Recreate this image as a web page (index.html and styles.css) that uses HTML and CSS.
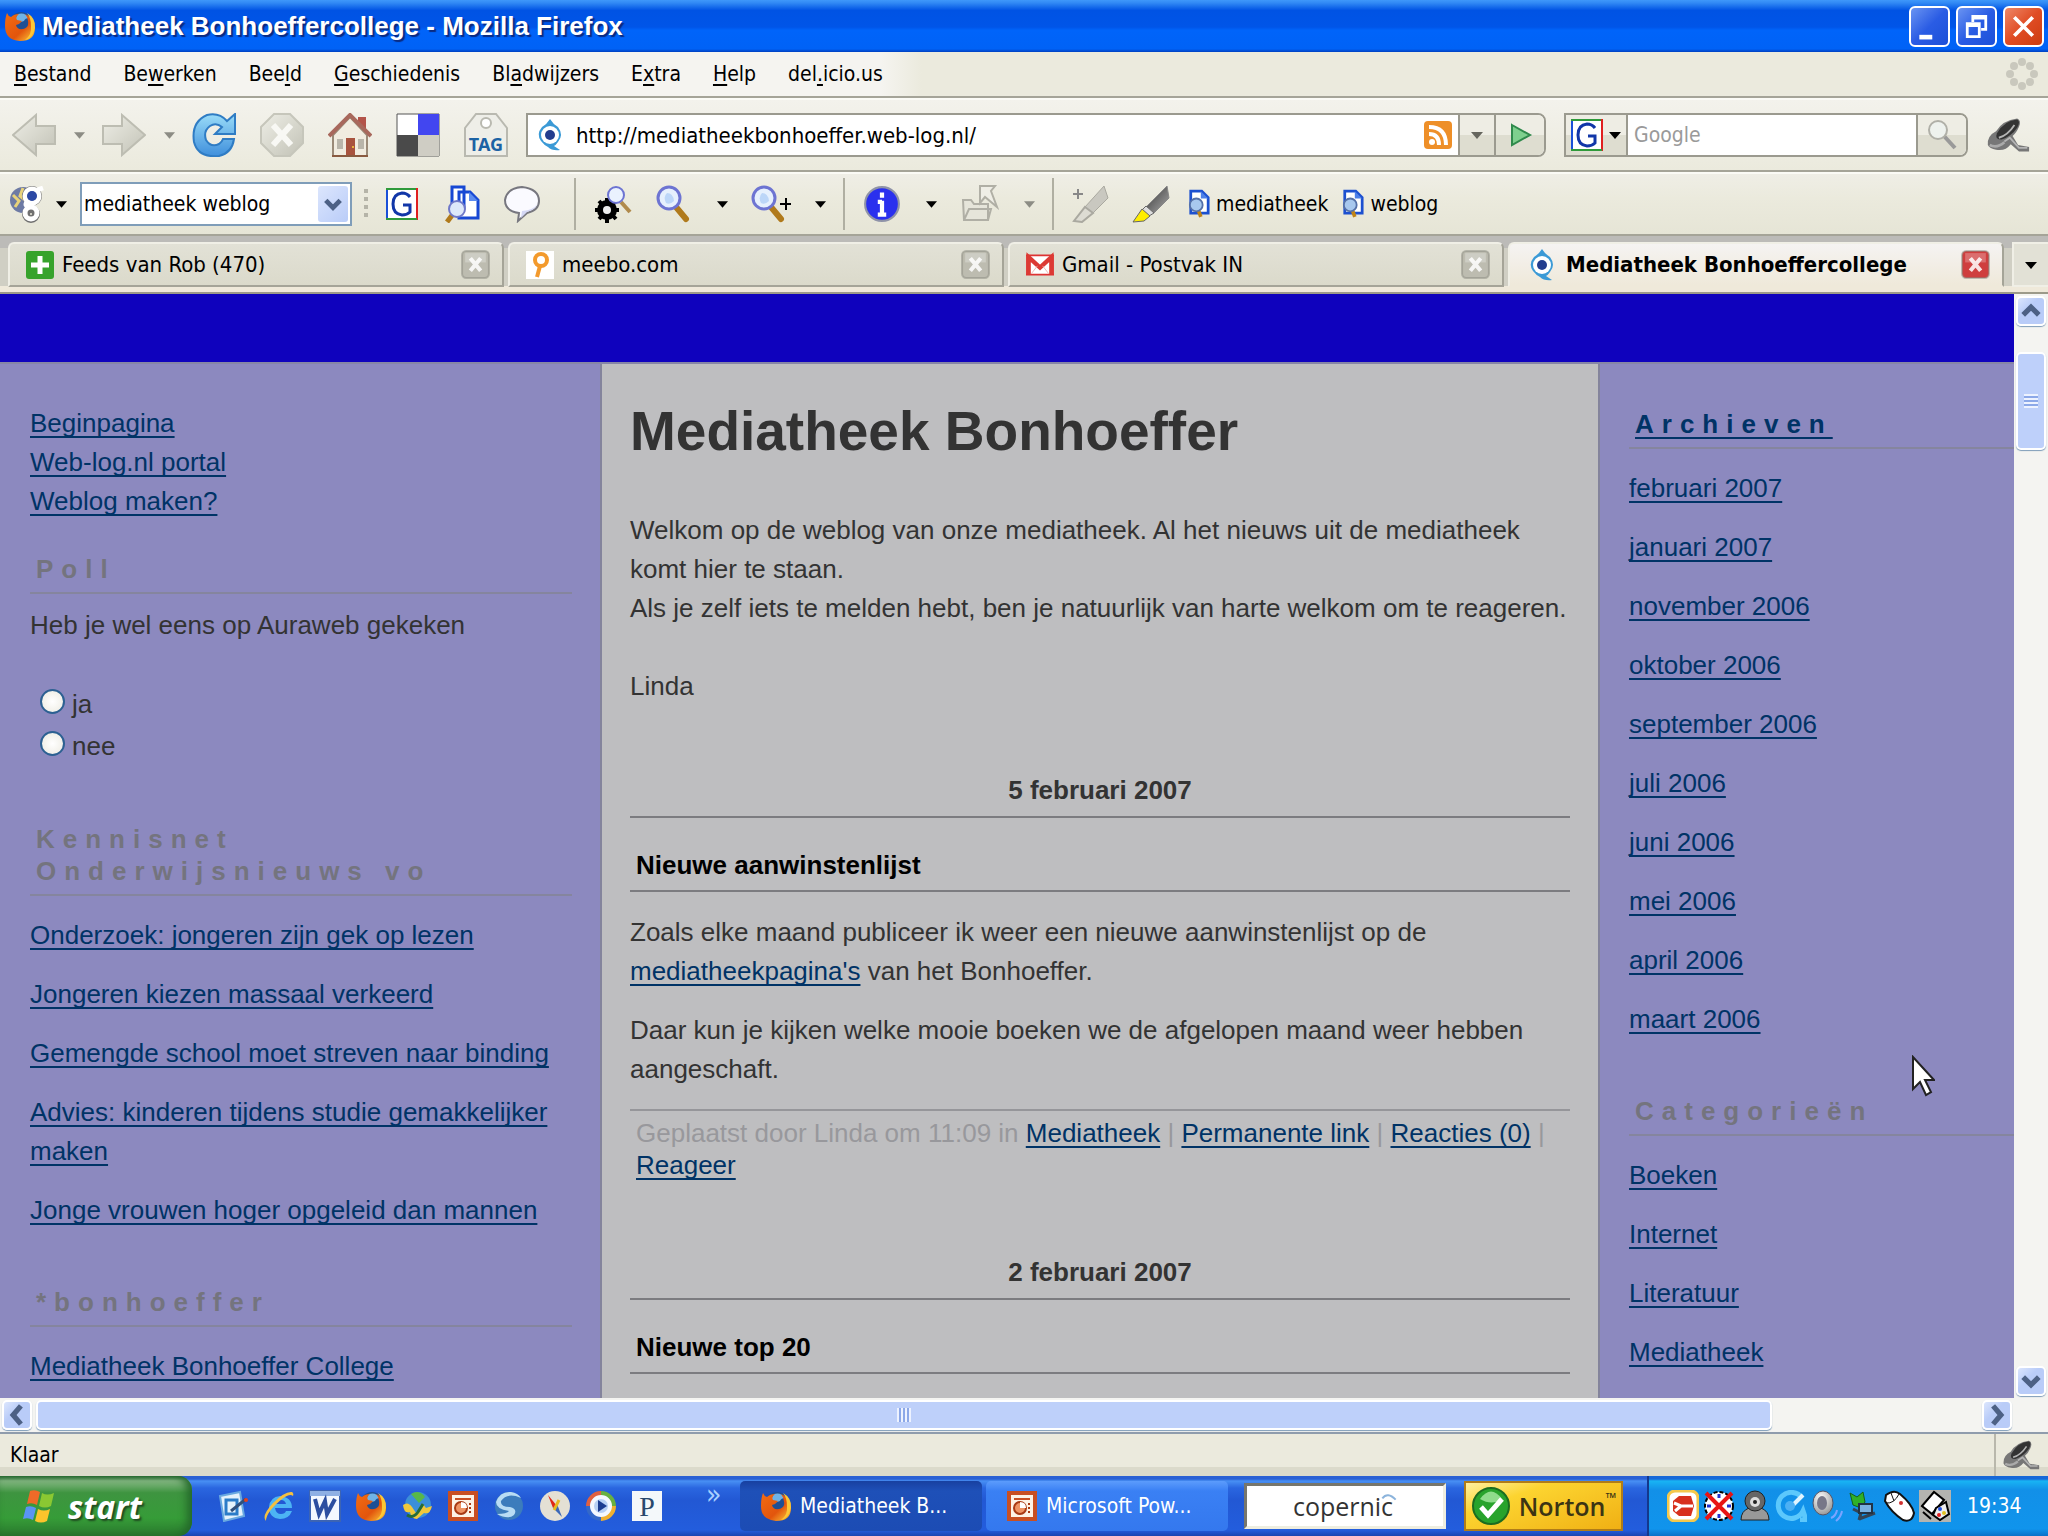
FILE: index.html
```html
<!DOCTYPE html>
<html lang="nl">
<head>
    <meta charset="UTF-8">
    <meta name="viewport" content="width=device-width, initial-scale=1.0">
    <title>Mediatheek Bonhoeffercollege - Mozilla Firefox</title>
    <link rel="stylesheet" href="styles.css">
</head>
<body>
    <!-- Shared icons -->
    <svg class="sprites" width="0" height="0" aria-hidden="true">
        <defs>
            <linearGradient id="grey" x1="0" y1="0" x2="1" y2="1"><stop offset="0" stop-color="#eeeee6"/><stop offset="1" stop-color="#c2c2b6"/></linearGradient>
            <linearGradient id="dark" x1="0" y1="0" x2="1" y2="1"><stop offset="0" stop-color="#333"/><stop offset="1" stop-color="#aaa"/></linearGradient>
            <linearGradient id="sky" x1="0" y1="0" x2="0" y2="1"><stop offset="0" stop-color="#9adcf8"/><stop offset="1" stop-color="#3f8fdc"/></linearGradient>
            <linearGradient id="fire" x1="0" y1="0" x2="1" y2="1"><stop offset="0" stop-color="#f36c12"/><stop offset=".6" stop-color="#e2550d"/><stop offset="1" stop-color="#ffd23c"/></linearGradient>
            <radialGradient id="ball" cx=".4" cy=".3" r=".7"><stop offset="0" stop-color="#fff"/><stop offset="1" stop-color="#9a9a9a"/></radialGradient>
        </defs>
        <symbol id="firefox" viewBox="0 0 32 32">
            <circle cx="17" cy="14" r="12" fill="#1f4f94"/>
            <path d="M14 4q7-2 11 4-4 0-5 3l-6 2-3-4z" fill="#6fb3e6"/>
            <path d="M3 3q1 3 4 4 3-3 8-3-4 3-2 6l5 1q-2 3-6 4 1 5 7 4 4-1 5-4 1-6-3-11 10 4 10 14 0 13-15 13Q1 30 1 16 1 8 3 3z" fill="url(#fire)"/>
            <path d="M23 3q9 5 8 15-2 10-10 12 7-5 6-14 0-8-4-13z" fill="#fcc735"/>
        </symbol>
        <symbol id="eye" viewBox="0 0 32 32">
            <path d="M16 0q3 5 8 8 6 8 0 15-2 3-4 4l6 4q-8 1-12-3-4-2-7-6-5-7 1-14 5-3 8-8z" fill="#3b9ad6"/>
            <circle cx="16" cy="16" r="9" fill="#fff"/><circle cx="16" cy="16" r="5" fill="#233d8e"/>
        </symbol>
        <symbol id="gbox" viewBox="0 0 32 32">
            <path d="M0 0h32v32H0z" fill="#fff"/>
            <path d="M1 32V1" stroke="#1a50d8" stroke-width="2"/><path d="M0 1h32" stroke="#2f9a3a" stroke-width="2"/>
            <path d="M31 0v32" stroke="#e02020" stroke-width="2"/><path d="M0 31h31" stroke="#2f9a3a" stroke-width="2"/>
            <path d="M24 9q-3-4-8-4-9 1-9 11t9 11q5 0 8-3v-7h-7" fill="none" stroke="#1136a8" stroke-width="3"/>
        </symbol>
        <symbol id="lens" viewBox="0 0 36 38">
            <path d="M21 22l10 12" stroke="#b07a1c" stroke-width="6" stroke-linecap="round"/>
            <circle cx="14" cy="13" r="11" fill="#e6f0fd" stroke="#6d74d2" stroke-width="3"/>
            <path d="M12 8q6 0 7 8-4 4-8 2-3-6 1-10z" fill="#bcd6f8"/>
        </symbol>
        <symbol id="doclens" viewBox="0 0 24 32">
            <path d="M3 2h12l7 7v17H3z" fill="#fff" stroke="#1c50d0" stroke-width="3"/><path d="M14 2v8h8" fill="#4d80e8"/>
            <path d="M11 22l3 8" stroke="#c08418" stroke-width="4"/><circle cx="9" cy="17" r="7" fill="#a8c8ee" stroke="#5470a8" stroke-width="2"/>
        </symbol>
        <symbol id="dish" viewBox="0 0 48 38">
            <path d="M2 30Q1 20 11 15 18 3 34 1q5 2 2 9-3 7-7 10l6 10 12 2v5H36l-9-8q-6 8-16 6-7-1-9-5z" fill="#777"/>
            <path d="M12 17Q20 3 34 2q4 2 0 9-6 9-17 13-8 0-5-7z" fill="#333"/>
            <path d="M14 22q10-3 17-14M20 26l6-4 10 11h9" stroke="#b4b4b4" stroke-width="2" fill="none"/>
            <path d="M4 30q8 4 16-3" stroke="#aaa" stroke-width="3" fill="none"/>
        </symbol>
        <symbol id="caret" viewBox="0 0 12 8"><path d="M0 1h12L6 8z" fill="currentColor"/></symbol>
        <symbol id="cross" viewBox="0 0 28 28">
            <rect x="1" y="1" width="26" height="26" rx="4" fill="currentColor" stroke="#8a8a80" stroke-opacity=".5" stroke-width="2"/>
            <path d="M4 3h20v9H4z" fill="#fff" fill-opacity=".25"/>
            <path d="M9 8l10 12M19 8L9 20" stroke="#fff" stroke-opacity=".85" stroke-width="4"/>
        </symbol>
        <symbol id="ppt" viewBox="0 0 32 32">
            <path d="M1 1h30v30H1z" fill="#c84f22"/><path d="M5 5h22v22H5z" fill="#fdf3e6"/>
            <path d="M8 9h16" stroke="#c84f22" stroke-width="2"/><circle cx="14" cy="18" r="6" fill="#ee9464" stroke="#a83a14" stroke-width="2"/>
            <path d="M14 18v-6q6 0 6 6z" fill="#fff"/><path d="M23 13v2m0 2v2m0 2v2" stroke="#a83a14" stroke-width="2"/>
        </symbol>
        <symbol id="chev-up" viewBox="0 0 20 20"><path d="M4 13l6-6 6 6" fill="none" stroke="#4d6185" stroke-width="4"/></symbol>
        <symbol id="chev-down" viewBox="0 0 20 20"><path d="M4 7l6 6 6-6" fill="none" stroke="#4d6185" stroke-width="4"/></symbol>
        <symbol id="chev-left" viewBox="0 0 20 20"><path d="M13 3l-6 7 6 7" fill="none" stroke="#4d6185" stroke-width="4"/></symbol>
        <symbol id="chev-right" viewBox="0 0 20 20"><path d="M7 3l6 7-6 7" fill="none" stroke="#4d6185" stroke-width="4"/></symbol>
    </svg>

    <header class="titlebar">
        <svg class="icon-32"><use href="#firefox"/></svg>
        <h1>Mediatheek Bonhoeffercollege - Mozilla Firefox</h1>
        <button class="win-btn" aria-label="Minimaliseren"><svg viewBox="0 0 40 40"><path d="M9 29h14v5H9z" fill="#fff"/></svg></button>
        <button class="win-btn" aria-label="Verkleinen"><svg viewBox="0 0 40 40"><path d="M16 15V9h14v14h-5M16 11h14" fill="none" stroke="#fff" stroke-width="3"/><path d="M10 17h13v14H10zM10 19h13" fill="none" stroke="#fff" stroke-width="3"/></svg></button>
        <button class="win-btn close" aria-label="Sluiten"><svg viewBox="0 0 40 40"><path d="M10 10l20 20M30 10L10 30" stroke="#fff" stroke-width="4"/></svg></button>
    </header>

    <nav class="menubar">
        <button><u>B</u>estand</button>
        <button>Be<u>w</u>erken</button>
        <button>Bee<u>l</u>d</button>
        <button><u>G</u>eschiedenis</button>
        <button>Bl<u>a</u>dwijzers</button>
        <button>E<u>x</u>tra</button>
        <button><u>H</u>elp</button>
        <button>del<u>.</u>icio.us</button>
        <svg class="throbber" viewBox="0 0 32 32" fill="#c9c8bd"><circle cx="16" cy="4" r="4"/><circle cx="24" cy="8" r="4"/><circle cx="28" cy="16" r="4"/><circle cx="24" cy="24" r="4"/><circle cx="16" cy="28" r="4"/><circle cx="8" cy="24" r="4"/><circle cx="4" cy="16" r="4"/><circle cx="8" cy="8" r="4"/></svg>
    </nav>

    <div class="navbar">
        <button class="nav-btn" aria-label="Vorige"><svg viewBox="0 0 44 44"><path d="M1 22L24 2v11h19v18H24v11z" fill="url(#grey)" stroke="#bdbdb2" stroke-width="2"/></svg></button>
        <button class="nav-caret off" aria-label="Geschiedenis terug"><svg><use href="#caret"/></svg></button>
        <button class="nav-btn" aria-label="Volgende"><svg viewBox="0 0 44 44"><path d="M43 22L20 2v11H1v18h19v11z" fill="url(#grey)" stroke="#bdbdb2" stroke-width="2"/></svg></button>
        <button class="nav-caret off" aria-label="Geschiedenis vooruit"><svg><use href="#caret"/></svg></button>
        <button class="nav-btn" aria-label="Vernieuwen"><svg viewBox="0 0 44 44"><path d="M43 1v20H23l7-7q-6-5-12-1-7 5-4 14 5 8 13 4 3-2 4-5h11q-2 14-15 17Q6 45 2 29-1 9 15 2q12-3 20 6z" fill="url(#sky)" stroke="#2f7cc4" stroke-width="2"/></svg></button>
        <button class="nav-btn" aria-label="Stoppen"><svg viewBox="0 0 44 44"><path d="M14 1h16l13 13v16L30 43H14L1 30V14z" fill="url(#grey)" stroke="#c6c6bb" stroke-width="2"/><path d="M13 12l18 20M31 12L13 32" stroke="#f8f8f4" stroke-width="6"/></svg></button>
        <button class="nav-btn" aria-label="Startpagina"><svg viewBox="0 0 44 44"><path d="M30 4h8v14h-8z" fill="#b3544a"/><path d="M5 22L22 4l17 18v21H5z" fill="#f1ece0" stroke="#9a8a78" stroke-width="2"/><path d="M1 23L22 2l21 21" fill="none" stroke="#a8685c" stroke-width="4"/><path d="M18 25h9v17h-9z" fill="#a8533e"/><path d="M9 26h6v10H9zM30 26h6v10h-6z" fill="#b9b5aa"/><path d="M4 43h36" stroke="#8a5a40" stroke-width="2"/><circle cx="25" cy="34" r="1" fill="#ffd23c"/></svg></button>
        <button class="nav-btn" aria-label="del.icio.us"><svg viewBox="0 0 44 44"><path d="M1 1h42v42H1z" fill="#fff" stroke="#555"/><path d="M22 1h21v21H22z" fill="#4246f0"/><path d="M1 22h21v21H1z" fill="#4a4a4a"/><path d="M22 22h21v21H22z" fill="#cfcdc4"/></svg></button>
        <button class="nav-btn tag" aria-label="Tag"><svg viewBox="0 0 44 44"><path d="M12 1h20l11 14v28H1V15z" fill="#eeeee8" stroke="#b9b9b0" stroke-width="2"/><circle cx="22" cy="10" r="5" fill="#fff" stroke="#b9b9b0" stroke-width="2"/><text x="22" y="38" text-anchor="middle" class="tag-text">TAG</text></svg></button>

        <div class="url-bar">
            <svg class="icon-32"><use href="#eye"/></svg>
            <input type="text" aria-label="Adres" value="http://mediatheekbonhoeffer.web-log.nl/">
            <svg class="icon-28" viewBox="0 0 28 28"><rect width="28" height="28" rx="4" fill="#ee8f28"/><circle cx="8" cy="21" r="3" fill="#fff"/><path d="M5 13q10 0 10 11M5 6q17 0 17 18" fill="none" stroke="#fff" stroke-width="4"/></svg>
            <button class="url-drop" aria-label="Adressen"><svg class="caret"><use href="#caret"/></svg></button>
            <button class="go" aria-label="Ga"><svg class="icon-28" viewBox="0 0 28 28"><path d="M6 4l18 10L6 24z" fill="#7ed08e" stroke="#2f8a4c" stroke-width="2"/></svg></button>
        </div>

        <div class="search-bar">
            <button class="engine" aria-label="Zoekmachine"><svg class="icon-32"><use href="#gbox"/></svg><svg class="caret"><use href="#caret"/></svg></button>
            <input type="text" aria-label="Zoeken" placeholder="Google">
            <button class="go" aria-label="Zoek"><svg class="icon-32" viewBox="0 0 32 32"><path d="M18 17l11 12" stroke="#999" stroke-width="4"/><circle cx="12" cy="11" r="9" fill="#eef2ee" stroke="#b0b0a8" stroke-width="2"/></svg></button>
        </div>
        <button class="nav-btn dish" aria-label="Schotel"><svg><use href="#dish"/></svg></button>
    </div>

    <div class="toolbar">
        <button class="g-btn" aria-label="Google"><svg viewBox="0 0 36 38"><circle cx="14" cy="15" r="13" fill="#6d7aa4"/><path d="M4 10l6 6-4 6M14 3l-3 8 6 5" stroke="#e8d27a" stroke-width="3" fill="none"/><g fill="none" stroke="#707070" stroke-width="8"><circle cx="23" cy="11" r="6"/><circle cx="22" cy="29" r="5"/></g><g fill="none" stroke="#fff" stroke-width="5"><circle cx="23" cy="11" r="7"/><path d="M18 17q-3 4 3 5"/><circle cx="22" cy="28" r="6"/><path d="M28 5l6-2"/></g><circle cx="23" cy="11" r="5" fill="#2c49a4"/></svg><svg class="caret"><use href="#caret"/></svg></button>
        <div class="combo">
            <input type="text" aria-label="Zoektermen" value="mediatheek weblog">
            <button aria-label="Eerdere zoektermen"><svg class="icon-28"><use href="#chev-down"/></svg></button>
        </div>
        <span class="grip"></span>
        <div class="group first">
            <button aria-label="Google"><svg class="icon-32"><use href="#gbox"/></svg></button>
            <button aria-label="Zoek op site"><svg viewBox="0 0 36 38"><path d="M8 2h12v20H8zM15 7h11l8 8v18H15z" fill="#fff" stroke="#1748d4" stroke-width="3"/><path d="M25 7v9h9z" fill="#5c8cf0"/><path d="M9 29l-6 8" stroke="#b07a1c" stroke-width="5"/><circle cx="13" cy="24" r="8" fill="#dde8fa" stroke="#6f78c8" stroke-width="2"/></svg></button>
            <button aria-label="Discussie"><svg viewBox="0 0 38 38"><path d="M19 2q17 2 17 14 0 9-12 12l-9 8 1-8Q2 26 2 15 4 3 19 2z" fill="#fafaff" stroke="#77777f" stroke-width="2"/><path d="M34 19q-2 6-10 8l-6 6 1-7q12-1 15-7z" fill="#d3d6f4"/></svg></button>
        </div>
        <div class="group">
            <button aria-label="Geavanceerd zoeken"><svg viewBox="0 0 38 38"><circle cx="13" cy="25" r="7" fill="none" stroke="#000" stroke-width="6"/><path d="M13 13v25M1 25h24M5 16l17 18M22 16L5 34" stroke="#000" stroke-width="4"/><circle cx="13" cy="25" r="4" fill="#eee"/><path d="M27 17l9 10" stroke="#b08a4c" stroke-width="4"/><circle cx="22" cy="10" r="8" fill="#eaf2fe" stroke="#6d74d2" stroke-width="2"/></svg></button>
            <button aria-label="Zoeken"><svg><use href="#lens"/></svg></button>
            <button class="narrow" aria-label="Meer zoeken"><svg><use href="#caret"/></svg></button>
            <button aria-label="Zoom"><svg class="wide" viewBox="0 0 42 38"><use href="#lens" width="36" height="38"/><path d="M30 19h11M36 13v12" stroke="#000" stroke-width="2"/></svg></button>
            <button class="narrow" aria-label="Meer zoom"><svg><use href="#caret"/></svg></button>
        </div>
        <div class="group">
            <button aria-label="Info"><svg viewBox="0 0 36 36"><circle cx="18" cy="18" r="16" fill="#2a30ee" stroke="#8f93a8" stroke-width="2"/><path d="M18 7v5M18 15v13M14 16h4M14 28h8" stroke="#fff" stroke-width="4"/></svg></button>
            <button class="narrow" aria-label="Meer info"><svg><use href="#caret"/></svg></button>
            <button aria-label="Omhoog"><svg viewBox="0 0 38 38"><path d="M2 15h8l3 4h14v16H3zM3 35l5-11h22l-3 11" fill="#e6e5da" stroke="#b0afa5" stroke-width="2"/><path d="M19 1h15l-4 5 6 16-12-10-5 6z" fill="#efeee6" stroke="#b0afa5" stroke-width="2"/></svg></button>
            <button class="narrow off" aria-label="Meer omhoog"><svg><use href="#caret"/></svg></button>
        </div>
        <div class="group last">
            <button aria-label="Markeren"><svg viewBox="0 0 38 38"><path d="M32 1l4 12-15 15-8-6z" fill="#c9c8c0" stroke="#aaa9a0"/><path d="M13 22l8 6-11 9-8-1z" fill="#dddcd3" stroke="#aaa9a0" stroke-width="2"/><path d="M1 9h10M6 4v10" stroke="#888" stroke-width="2"/></svg></button>
            <button aria-label="Markeerstift"><svg viewBox="0 0 38 38"><path d="M35 1l2 12-15 15-8-6z" fill="url(#dark)" stroke="#888"/><path d="M14 21l8 7-5 3-7-6z" fill="#ddd" stroke="#666"/><path d="M10 24l8 7-6 5-11 1z" fill="#ffee00" stroke="#666"/></svg></button>
        </div>
        <button class="term"><svg><use href="#doclens"/></svg>mediatheek</button>
        <button class="term"><svg><use href="#doclens"/></svg>weblog</button>
    </div>

    <div class="tabs">
        <div class="tab">
            <svg class="icon-28" viewBox="0 0 28 28"><rect width="28" height="28" rx="3" fill="#37a32c"/><path d="M14 5v18M5 14h18" stroke="#fff" stroke-width="5"/></svg>
            <span>Feeds van Rob (470)</span>
            <button aria-label="Tabblad sluiten"><svg><use href="#cross"/></svg></button>
        </div>
        <div class="tab">
            <svg class="icon-28" viewBox="0 0 28 28"><path d="M0 0h28v28H0z" fill="#fff"/><circle cx="15" cy="9" r="6" fill="none" stroke="#f39a2c" stroke-width="4"/><path d="M14 15l-3 11" stroke="#f39a2c" stroke-width="4"/></svg>
            <span>meebo.com</span>
            <button aria-label="Tabblad sluiten"><svg><use href="#cross"/></svg></button>
        </div>
        <div class="tab">
            <svg class="icon-28" viewBox="0 0 32 24"><path d="M0 1h32v22H0z" fill="#fff" stroke="#d33" stroke-width="2"/><path d="M3 23V3l13 12L29 3v20" fill="none" stroke="#dc3a34" stroke-width="5"/><path d="M6 22l7-9M26 22l-7-9" stroke="#e9b0ac"/></svg>
            <span>Gmail - Postvak IN</span>
            <button aria-label="Tabblad sluiten"><svg><use href="#cross"/></svg></button>
        </div>
        <div class="tab active">
            <svg class="icon-32"><use href="#eye"/></svg>
            <span>Mediatheek Bonhoeffercollege</span>
            <button aria-label="Tabblad sluiten"><svg><use href="#cross"/></svg></button>
        </div>
        <button class="tab-list" aria-label="Alle tabbladen"><svg class="caret"><use href="#caret"/></svg></button>
    </div>

    <div class="viewport">
        <div class="page">
            <div class="banner"></div>
            <div class="columns">
                <aside class="left">
                    <ul class="plain">
                        <li><a href="#">Beginpagina</a></li>
                        <li><a href="#">Web-log.nl portal</a></li>
                        <li><a href="#">Weblog maken?</a></li>
                    </ul>
                    <h2 class="poll-title">Poll</h2>
                    <form class="poll">
                        <p>Heb je wel eens op Auraweb gekeken</p>
                        <label><input type="radio" name="poll"> ja</label>
                        <label><input type="radio" name="poll"> nee</label>
                    </form>
                    <h2>Kennisnet<br>Onderwijsnieuws vo</h2>
                    <ul>
                        <li><a href="#">Onderzoek: jongeren zijn gek op lezen</a></li>
                        <li><a href="#">Jongeren kiezen massaal verkeerd</a></li>
                        <li><a href="#">Gemengde school moet streven naar binding</a></li>
                        <li><a href="#">Advies: kinderen tijdens studie gemakkelijker maken</a></li>
                        <li><a href="#">Jonge vrouwen hoger opgeleid dan mannen</a></li>
                    </ul>
                    <h2>*bonhoeffer</h2>
                    <ul>
                        <li><a href="#">Mediatheek Bonhoeffer College</a></li>
                    </ul>
                </aside>

                <main>
                    <h1>Mediatheek Bonhoeffer</h1>
                    <p class="intro">Welkom op de weblog van onze mediatheek. Al het nieuws uit de mediatheek komt hier te staan.<br>Als je zelf iets te melden hebt, ben je natuurlijk van harte welkom om te reageren.<br><br>Linda</p>

                    <h2>5 februari 2007</h2>
                    <article>
                        <h3>Nieuwe aanwinstenlijst</h3>
                        <p>Zoals elke maand publiceer ik weer een nieuwe aanwinstenlijst op de <a href="#">mediatheekpagina's</a> van het Bonhoeffer.</p>
                        <p>Daar kun je kijken welke mooie boeken we de afgelopen maand weer hebben aangeschaft.</p>
                        <div class="posted">Geplaatst door Linda om 11:09 in <a href="#">Mediatheek</a> | <a href="#">Permanente link</a> | <a href="#">Reacties (0)</a> | <a href="#">Reageer</a></div>
                    </article>

                    <h2>2 februari 2007</h2>
                    <article>
                        <h3>Nieuwe top 20</h3>
                    </article>
                </main>

                <aside class="right">
                    <h2><a href="#">Archieven</a></h2>
                    <ul>
                        <li><a href="#">februari 2007</a></li>
                        <li><a href="#">januari 2007</a></li>
                        <li><a href="#">november 2006</a></li>
                        <li><a href="#">oktober 2006</a></li>
                        <li><a href="#">september 2006</a></li>
                        <li><a href="#">juli 2006</a></li>
                        <li><a href="#">juni 2006</a></li>
                        <li><a href="#">mei 2006</a></li>
                        <li><a href="#">april 2006</a></li>
                        <li><a href="#">maart 2006</a></li>
                    </ul>
                    <h2>Categorieën</h2>
                    <ul>
                        <li><a href="#">Boeken</a></li>
                        <li><a href="#">Internet</a></li>
                        <li><a href="#">Literatuur</a></li>
                        <li><a href="#">Mediatheek</a></li>
                    </ul>
                </aside>
            </div>
        </div>
        <div class="scroll-v">
            <button aria-label="Omhoog"><svg><use href="#chev-up"/></svg></button>
            <div class="track"><div class="thumb"></div></div>
            <button aria-label="Omlaag"><svg><use href="#chev-down"/></svg></button>
        </div>
    </div>
    <div class="scroll-h">
        <button aria-label="Links"><svg><use href="#chev-left"/></svg></button>
        <div class="track"><div class="thumb"></div></div>
        <button aria-label="Rechts"><svg><use href="#chev-right"/></svg></button>
        <span class="corner"></span>
    </div>

    <div class="statusbar">
        <span>Klaar</span>
        <span class="panel"><svg><use href="#dish"/></svg></span>
    </div>

    <footer class="taskbar">
        <button class="start">
            <svg viewBox="0 0 36 36"><path d="M8 3q5-2 10 1l-3 13q-5-3-10-1z" fill="#ee6a28"/><path d="M20 5q5 3 12 0l-3 13q-6 3-12 0z" fill="#8ac832"/><path d="M4 19q5-2 10 1l-3 12q-5-3-10-1z" fill="#5a94f4"/><path d="M16 21q6 3 12 0l-3 12q-6 3-12 0z" fill="#fcc42c"/></svg>
            start
        </button>
        <div class="quick">
            <button aria-label="Bureaublad"><svg viewBox="0 0 32 32"><path d="M3 6l20-4 4 24-20 5z" fill="#e4f2fc" stroke="#68a8e0" stroke-width="2"/><path d="M9 10h11v14H9z" fill="none" stroke="#2b7cc8" stroke-width="3"/><path d="M14 21L29 9" stroke="#30507c" stroke-width="3"/><circle cx="29" cy="10" r="2" fill="#e04020"/></svg></button>
            <button aria-label="Internet Explorer"><svg viewBox="0 0 32 32"><path d="M29 18H12q1 6 6 6 4 0 5-3h6q-3 8-12 8Q6 28 6 17 7 7 17 6q12 1 12 12zM12 14h11q-1-4-5-4t-6 4z" fill="#4cb4f4"/><path d="M3 31Q-2 26 10 13 22 1 29 2q2 1 1 4-3-3-11 3Q3 22 3 31z" fill="#f4c040"/></svg></button>
            <button aria-label="Word"><svg viewBox="0 0 32 32"><path d="M1 1h30v30H1z" fill="#f4f8ff" stroke="#3c64b4" stroke-width="2"/><path d="M1 1h30v5H1z" fill="#8fb0e4"/><path d="M6 9l4 15 6-13 2 13 8-15" fill="none" stroke="#2c4ea0" stroke-width="4"/></svg></button>
            <button aria-label="Firefox"><svg><use href="#firefox"/></svg></button>
            <button aria-label="Messenger"><svg viewBox="0 0 32 32"><circle cx="17" cy="15" r="13" fill="#3b8fd8"/><path d="M10 4q8-5 14 3l-6 6z" fill="#58b848"/><path d="M2 15q5-4 9 2l4 6 7-9 3 4 6-2q-2 9-8 7l-7 6q-6 0-7-7-6 2-7-7z" fill="#f0c83c"/><path d="M6 25q6 4 11-3l5-8" fill="none" stroke="#256c38" stroke-width="3"/></svg></button>
            <button aria-label="PowerPoint"><svg><use href="#ppt"/></svg></button>
            <button aria-label="Media"><svg viewBox="0 0 32 32"><circle cx="16" cy="16" r="14" fill="#3c7cbc"/><path d="M28 8Q14 2 8 11q-1 6 9 6 8 2 4 8-6 5-17-1 10 0 12-3-13-2-13-9Q7 1 18 2q7 1 10 6z" fill="#b8dcf4"/></svg></button>
            <button aria-label="Kompas"><svg viewBox="0 0 32 32"><circle cx="16" cy="16" r="15" fill="#e4e0d4"/><path d="M9 5l9 11-4 2z" fill="#e02818"/><path d="M18 14l5 13-9-9z" fill="#3c68b8"/><path d="M20 10l-5 10" stroke="#e8b820" stroke-width="3"/></svg></button>
            <button aria-label="Media Player"><svg viewBox="0 0 32 32"><circle cx="16" cy="16" r="12" fill="#f4f8ff"/><path d="M16 3a13 13 0 0 1 13 13" stroke="#68b040" stroke-width="4" fill="none"/><path d="M29 16a13 13 0 0 1-13 13" stroke="#f0b030" stroke-width="4" fill="none"/><path d="M16 29A13 13 0 0 1 3 16" stroke="#3468c8" stroke-width="4" fill="none"/><path d="M3 16A13 13 0 0 1 16 3" stroke="#e06040" stroke-width="4" fill="none"/><circle cx="16" cy="16" r="7" fill="#b8d0f4"/><path d="M13 10l9 6-9 6z" fill="#1c3c90"/></svg></button>
            <button aria-label="Publisher"><svg viewBox="0 0 32 32"><path d="M1 1h30v30H1z" fill="#f4f8fa"/><text x="16" y="26" text-anchor="middle" class="p-text">P</text></svg></button>
        </div>
        <span class="more">»</span>
        <button class="task pressed"><svg class="icon-32"><use href="#firefox"/></svg>Mediatheek B...</button>
        <button class="task"><svg class="icon-32"><use href="#ppt"/></svg>Microsoft Pow...</button>
        <button class="copernic">copernic<svg viewBox="0 0 24 12"><path d="M2 8Q10-2 22 10" fill="none" stroke="#8cb4dc" stroke-width="3"/></svg></button>
        <button class="norton"><svg viewBox="0 0 40 40"><circle cx="20" cy="20" r="18" fill="#28a32c" stroke="#1c6c20" stroke-width="2"/><path d="M9 13Q20-2 31 13q-10 7-22 0z" fill="#8fdc8c"/><path d="M10 21l7 8 14-16" fill="none" stroke="#fff" stroke-width="5"/></svg>Norton<sup>™</sup></button>
        <div class="tray">
            <svg viewBox="0 0 32 32"><rect x="1" y="1" width="30" height="30" rx="7" fill="#fff" stroke="#f4c84c" stroke-width="3"/><path d="M12 6h12l3 10-3 10H12L6 21V11z" fill="#d8301c"/><path d="M7 13l7 3h12M14 16l-6 5" stroke="#fff" stroke-width="3" fill="none"/></svg>
            <svg viewBox="0 0 32 32"><circle cx="16" cy="16" r="14" fill="#fff" stroke="#000" stroke-width="2" stroke-dasharray="4 2"/><path d="M16 4v4m0 16v4M4 16h4m16 0h4" stroke="#2030d0" stroke-width="3"/><path d="M3 3l26 26M29 3L3 29" stroke="#e81414" stroke-width="4"/></svg>
            <svg viewBox="0 0 32 32"><path d="M2 30q0-9 8-12h12q8 3 8 12z" fill="#999" stroke="#222"/><circle cx="16" cy="11" r="10" fill="#666" stroke="#222"/><circle cx="16" cy="12" r="5" fill="#ddd"/><circle cx="16" cy="12" r="2" fill="#222"/></svg>
            <svg viewBox="0 0 32 32"><path d="M27 8a13 13 0 1 0 1 13l3 9h-6" fill="none" stroke="#5cc8fc" stroke-width="5"/><path d="M14 19L28 5" stroke="#e0f4ff" stroke-width="4"/><circle cx="15" cy="16" r="5" fill="#4cb0f4"/></svg>
            <svg viewBox="0 0 32 32"><ellipse cx="12" cy="13" rx="10" ry="12" fill="url(#ball)" stroke="#556"/><ellipse cx="11" cy="13" rx="5" ry="7" fill="#778"/><path d="M20 28q5-2 6-8M25 31q5-4 6-10" fill="none" stroke="#7aa4ff" stroke-width="2"/></svg>
            <svg viewBox="0 0 32 32"><path d="M3 3l7 4 6-5 2 10-4 6-8-3z" fill="#30b028" stroke="#166016"/><path d="M6 19l8 4-2 7M12 29l16-6" stroke="#345" stroke-width="3" fill="none"/><path d="M12 14h13v9H12z" fill="#7ab0e0" stroke="#234" stroke-width="2"/></svg>
            <svg viewBox="0 0 32 32"><path d="M3 5q8-6 14-1 12 10 14 19-2 10-11 7Q8 22 2 11z" fill="#fff" stroke="#111" stroke-width="2"/><path d="M3 13q8 1 13-9M8 3l3 8" stroke="#111" fill="none"/><circle cx="18" cy="13" r="2" fill="#d03030"/></svg>
            <svg viewBox="0 0 32 32"><path d="M0 0h32v32H0z" fill="#b4b4b0"/><path d="M3 16L15 2l10 8-12 14z" fill="#fff" stroke="#000" stroke-width="2"/><path d="M4 22l8 7M17 18l10-6 3 12-9 6-7-5z" fill="#eee" stroke="#000" stroke-width="2"/><circle cx="21" cy="19" r="2" fill="#2050e0"/><circle cx="25" cy="23" r="2" fill="#e0c020"/><circle cx="20" cy="25" r="2" fill="#e02020"/></svg>
            <time>19:34</time>
        </div>
    </footer>

    <svg class="pointer" viewBox="0 0 24 42"><path d="M2 2v32l7-7 6 13 5-3-6-12h9z" fill="#fff" stroke="#222" stroke-width="2"/></svg>
</body>
</html>
```
FILE: styles.css
```css
* {
    box-sizing: border-box;
}

body {
    margin: 0;
    height: 100vh;
    overflow: hidden;
    display: flex;
    flex-direction: column;
    background-color: #ebeadd;
    color: #000000;
    font-family: "DejaVu Sans Condensed", "Noto Sans", sans-serif;
    font-size: 21px;
}

h1, h2, h3, p, ul {
    margin: 0;
    padding: 0;
}

button, input {
    margin: 0;
    padding: 0;
    border: none;
    background: none;
    color: inherit;
    font: inherit;
}

button {
    display: flex;
    align-items: center;
    justify-content: center;
    flex: none;
}

svg {
    flex: none;
    display: block;
}

.sprites {
    position: absolute;
}

.icon-32 {
    width: 32px;
    height: 32px;
}

.icon-28 {
    width: 28px;
    height: 28px;
}

.caret {
    width: 12px;
    height: 8px;
}

.off {
    color: #8c8c84;
}

/* Title bar */
.titlebar {
    flex: none;
    height: 52px;
    display: flex;
    align-items: center;
    gap: 6px;
    padding: 0 4px;
    background: linear-gradient(#3f98fa, #3088f4 6%, #0053e4 20%, #0055e8 52%, #0064fa 58%, #0062f6 94%, #0040c0);
}

.titlebar h1 {
    flex: 1;
    color: #ffffff;
    font-family: "Liberation Sans", sans-serif;
    font-size: 26px;
    text-shadow: 2px 2px 1px #0a2a80;
}

.win-btn {
    width: 41px;
    height: 41px;
    border: 2px solid #ffffff;
    border-radius: 6px;
    background: linear-gradient(135deg, #6a94f2, #2a5ce4 50%, #1c50d8);
}

.win-btn.close {
    background: linear-gradient(135deg, #ee8868, #e04c24 50%, #cc3c10);
}

/* Menu */
.menubar {
    flex: none;
    height: 46px;
    display: flex;
    align-items: center;
    gap: 32px;
    padding: 0 10px 0 14px;
    background: linear-gradient(90deg, #f5f4f0 43%, #ebeadd 45%);
    border-bottom: 2px solid #a5a498;
}

.menubar u {
    text-underline-offset: 3px;
}

.throbber {
    width: 32px;
    height: 32px;
    margin-left: auto;
}

/* Navigation */
.navbar {
    flex: none;
    height: 74px;
    display: flex;
    align-items: center;
    background: linear-gradient(#f3f2ec, #ebeadd);
    border-top: 2px solid #fbfbf6;
    border-bottom: 2px solid #a5a498;
}

.nav-btn {
    width: 68px;
}

.nav-btn svg {
    width: 44px;
    height: 44px;
}

.nav-btn.dish {
    width: 80px;
}

.tag-text {
    font: bold 18px "Noto Sans", sans-serif;
    fill: #1c62a4;
}

.nav-caret {
    width: 22px;
}

.nav-caret svg {
    width: 11px;
    height: 8px;
}

.url-bar, .search-bar {
    height: 44px;
    display: flex;
    align-items: center;
    background-color: #ffffff;
    border: 2px solid #9b9a8f;
    border-radius: 0 8px 8px 0;
    overflow: hidden;
}

.url-bar {
    flex: 1;
    margin: 0 18px 0 6px;
    padding-left: 6px;
}

.url-bar input {
    flex: 1;
    min-width: 0;
    padding: 0 10px;
    font-size: 22px;
}

.url-drop, .go, .engine {
    height: 100%;
    background: linear-gradient(#eeede4 50%, #deddd0 50%);
}

.url-drop {
    width: 36px;
    margin-left: 6px;
    border-left: 2px solid #9b9a8f;
    color: #66665e;
}

.go {
    width: 50px;
    border-left: 2px solid #9b9a8f;
}

.search-bar {
    width: 404px;
}

.search-bar input {
    flex: 1;
    min-width: 0;
    padding: 0 6px;
}

.search-bar input::placeholder {
    color: #9a9a9a;
    opacity: 1;
}

.engine {
    width: 62px;
    gap: 6px;
    border-right: 2px solid #9b9a8f;
}

/* Google toolbar */
.toolbar {
    flex: none;
    height: 64px;
    display: flex;
    align-items: center;
    background: linear-gradient(#efeee6, #ebeadd 40%, #e6e5d6);
    border-top: 2px solid #fbfbf6;
    border-bottom: 2px solid #a5a498;
}

.toolbar svg {
    width: 38px;
    height: 38px;
}

.toolbar .icon-32 {
    width: 32px;
    height: 32px;
}

.toolbar .wide {
    width: 42px;
}

.toolbar .caret, .toolbar .narrow svg {
    width: 11px;
    height: 8px;
}

.g-btn {
    width: 80px;
    gap: 10px;
    padding-right: 6px;
}

.combo {
    width: 272px;
    height: 44px;
    display: flex;
    padding: 2px;
    background-color: #ffffff;
    border: 2px solid #7f9db9;
}

.combo input {
    flex: 1;
    min-width: 0;
}

.combo button {
    width: 30px;
    border-radius: 3px;
    background: linear-gradient(135deg, #dce6fd, #b9ccf8);
}

.combo svg {
    width: 24px;
    height: 24px;
}

.grip {
    width: 4px;
    height: 30px;
    margin: 0 4px 0 12px;
    background: repeating-linear-gradient(#b5b4a8 0 4px, transparent 4px 8px);
}

.group {
    height: 52px;
    display: flex;
    margin-left: 7px;
    padding-right: 4px;
    border-right: 2px solid #b0afa2;
}

.group.first {
    margin: 0;
    padding-right: 22px;
}

.group.last {
    border: none;
    padding: 0;
}

.group button {
    width: 60px;
}

.group .narrow {
    width: 38px;
}

.term {
    gap: 6px;
    margin: 0 7px;
}

.toolbar .term svg {
    width: 22px;
    height: 30px;
}

/* Tabs */
.tabs {
    flex: none;
    height: 58px;
    display: flex;
    gap: 4px;
    padding: 6px 0 7px 8px;
    background: linear-gradient(#bcbbb8 12px, #d0cfc4 12px 50px, #efe9da 50px 56px, #9c9a8a 56px);
    font-size: 22px;
}

.tab {
    flex: 1;
    display: flex;
    align-items: center;
    gap: 8px;
    padding: 0 12px 0 16px;
    background: linear-gradient(#e2e1d6, #dbdacb);
    border: 2px solid #f0efe6;
    border-right-color: #a5a498;
    border-bottom-color: #a5a498;
    border-radius: 6px 6px 0 0;
}

.tab span {
    flex: 1;
    white-space: nowrap;
}

.tab button {
    color: #bdbcb0;
}

.tab button svg {
    width: 29px;
    height: 29px;
}

.tab.active {
    background: linear-gradient(#f5f3f2, #efe9da);
    border-bottom-color: #efe9da;
    font-weight: bold;
}

.tab.active button {
    color: #cf3e3e;
}

.tab-list {
    width: 36px;
    margin-left: 4px;
    background-color: #e2e1d6;
    border: 2px solid #f0efe6;
    border-right: none;
}

/* Web page */
.viewport {
    flex: 1;
    min-height: 0;
    display: flex;
}

.page {
    flex: 1;
    min-width: 0;
    overflow: hidden;
    display: flex;
    flex-direction: column;
    color: #333333;
    background-color: #8c89bf;
    font-family: "Liberation Sans", Arial, sans-serif;
    font-size: 26px;
    line-height: 39px;
}

.banner {
    flex: none;
    height: 68px;
    background-color: #0f02bd;
}

.columns {
    flex: 1;
    min-height: 0;
    display: flex;
    border-top: 2px solid #8686a6;
}

.page a {
    color: #003366;
    text-underline-offset: 4px;
    text-decoration-thickness: 2px;
    text-decoration-skip-ink: none;
}

.left {
    width: 600px;
    flex: none;
    padding: 40px 28px 0 30px;
}

.right {
    width: 414px;
    flex: none;
    padding: 44px 0 0 29px;
}

aside ul {
    list-style: none;
}

aside li {
    margin-bottom: 20px;
}

aside .plain li {
    margin: 0;
}

aside h2 {
    margin: 56px 0 20px;
    padding: 0 6px 7px;
    border-bottom: 2px solid #85859e;
    color: #74747e;
    font-size: 26px;
    line-height: 32px;
    letter-spacing: 8px;
}

.right h2:first-child {
    margin-top: 0;
}

aside .poll-title {
    margin: 32px 0 12px;
}

.poll p {
    margin-bottom: 38px;
}

.poll label {
    display: flex;
    align-items: center;
    gap: 7px;
    height: 42px;
    padding-left: 10px;
}

.poll input {
    appearance: none;
    width: 25px;
    height: 25px;
    margin-bottom: 6px;
    border: 2px solid #2c6092;
    border-radius: 50%;
    background: radial-gradient(#ffffff, #eceae0);
}

main {
    flex: 1;
    min-width: 0;
    padding: 35px 28px 0;
    background-color: #bebec0;
    border-left: 2px solid #84849c;
    border-right: 2px solid #84849c;
}

main h1 {
    font-size: 55px;
    line-height: 64px;
}

.intro {
    margin: 48px 0 68px;
}

main h2 {
    padding-bottom: 10px;
    border-bottom: 2px solid #7c7c80;
    font-size: 26px;
    line-height: 32px;
    text-align: center;
}

main h3 {
    margin: 31px 0 21px;
    padding: 0 6px 9px;
    border-bottom: 2px solid #7c7c80;
    color: #000000;
    font-size: 26px;
    line-height: 32px;
}

article p {
    margin-bottom: 20px;
}

.posted {
    margin-bottom: 75px;
    padding: 6px 6px 0;
    border-top: 2px solid #96969a;
    color: #98989c;
    line-height: 32px;
}

/* Scrollbars */
.scroll-v, .scroll-h {
    flex: none;
    display: flex;
    padding: 2px;
    background-color: #f4f4f1;
}

.scroll-v {
    width: 34px;
    flex-direction: column;
}

.scroll-h {
    height: 36px;
    border-bottom: 2px solid #8f9cac;
}

.scroll-v button, .scroll-h button {
    width: 30px;
    height: 30px;
    border: 2px solid #ffffff;
    border-radius: 5px;
    background: linear-gradient(135deg, #dce6fd, #b9ccf8 40%);
    box-shadow: 0 1px 1px #7f9db9;
}

.scroll-v svg, .scroll-h svg {
    width: 26px;
    height: 26px;
}

.track {
    flex: 1;
}

.thumb {
    display: flex;
    align-items: center;
    justify-content: center;
    border: 2px solid #ffffff;
    border-radius: 5px;
    background-color: #bed0fa;
    box-shadow: 0 1px 1px #7f9db9;
}

.thumb::after {
    content: "";
    width: 14px;
    height: 14px;
}

.scroll-v .thumb {
    height: 98px;
    margin-top: 26px;
}

.scroll-v .thumb::after {
    background: repeating-linear-gradient(#edf2ff 0 2px, #8ca8e8 2px 4px);
}

.scroll-h .thumb {
    width: 89%;
    height: 30px;
    margin-left: 4px;
}

.scroll-h .thumb::after {
    background: repeating-linear-gradient(90deg, #edf2ff 0 2px, #8ca8e8 2px 4px);
}

.corner {
    width: 34px;
}

/* Status bar */
.statusbar {
    flex: none;
    height: 42px;
    display: flex;
    align-items: center;
    justify-content: space-between;
    padding-left: 10px;
    background: linear-gradient(#ebeadd 78%, #dbdacb 78%);
}

.panel {
    height: 100%;
    display: flex;
    align-items: center;
    padding: 0 8px 0 6px;
    border-left: 2px solid #b9b8ac;
}

.panel svg {
    width: 38px;
    height: 30px;
}

/* Taskbar */
.taskbar {
    flex: none;
    height: 60px;
    display: flex;
    align-items: center;
    color: #ffffff;
    background: linear-gradient(#2a60d4 3px, #4890f4 5px, #2a66e0 12px, #2258d4 24px, #235ddd 90%, #1a44b0);
}

.start {
    width: 192px;
    height: 100%;
    justify-content: flex-start;
    gap: 10px;
    padding-left: 22px;
    border-radius: 0 14px 14px 0;
    background: linear-gradient(#2c6c38, #86b884 8%, #3e9440 28%, #369c38 70%, #2a7a2e);
    box-shadow: inset -5px 0 8px #24682a;
    font: italic bold 32px "Open Sans", sans-serif;
    text-shadow: 2px 2px 2px #1f4a20;
}

.start svg {
    width: 36px;
    height: 36px;
}

.quick {
    display: flex;
    padding-left: 18px;
}

.quick button {
    width: 46px;
}

.quick svg {
    width: 32px;
    height: 32px;
}

.p-text {
    font: 28px "Liberation Serif", serif;
    fill: #28486c;
}

.more {
    width: 70px;
    height: 50px;
    padding-left: 36px;
    color: #a8d0ff;
    font-size: 28px;
    line-height: 28px;
}

.task {
    width: 242px;
    height: 50px;
    justify-content: flex-start;
    gap: 8px;
    margin-right: 4px;
    padding-left: 20px;
    border-radius: 5px;
    background: linear-gradient(#5c9cfc, #3a80f4 20%, #3478ee);
}

.task.pressed {
    background: linear-gradient(#1840a0, #1e50b8 20%, #1c4cb4);
}

.copernic {
    width: 202px;
    height: 46px;
    margin: 0 18px 0 12px;
    background-color: #ffffff;
    border: 3px solid #eeeddf;
    border-top-color: #77766c;
    border-left-color: #77766c;
    color: #333333;
    font: 25px "Open Sans", sans-serif;
}

.copernic svg {
    width: 16px;
    height: 12px;
    margin: 0 0 18px -12px;
}

.norton {
    width: 159px;
    height: 50px;
    gap: 8px;
    border: 2px solid #b07c18;
    background: linear-gradient(160deg, #fff0a0, #fcd430 30%, #f0b014);
    color: #3c3414;
    font: 600 25px "Open Sans", sans-serif;
}

.norton svg {
    width: 40px;
    height: 40px;
}

.norton sup {
    margin-left: -8px;
    padding-bottom: 16px;
    font-size: 14px;
    line-height: 14px;
}

.tray {
    height: 100%;
    flex: 1;
    display: flex;
    align-items: center;
    gap: 4px;
    margin-left: 24px;
    padding-left: 18px;
    border-left: 2px solid #14388c;
    background: linear-gradient(#1668d8 3px, #18b4f4 5px, #1290e8 14px, #1094ec 88%, #0c70c8);
    white-space: nowrap;
}

.tray svg {
    width: 32px;
    height: 32px;
}

.tray time {
    margin-left: 12px;
}

/* Mouse pointer lies over the page */
.pointer {
    position: absolute;
    left: 1911px;
    top: 1055px;
    width: 24px;
    height: 42px;
}
```
